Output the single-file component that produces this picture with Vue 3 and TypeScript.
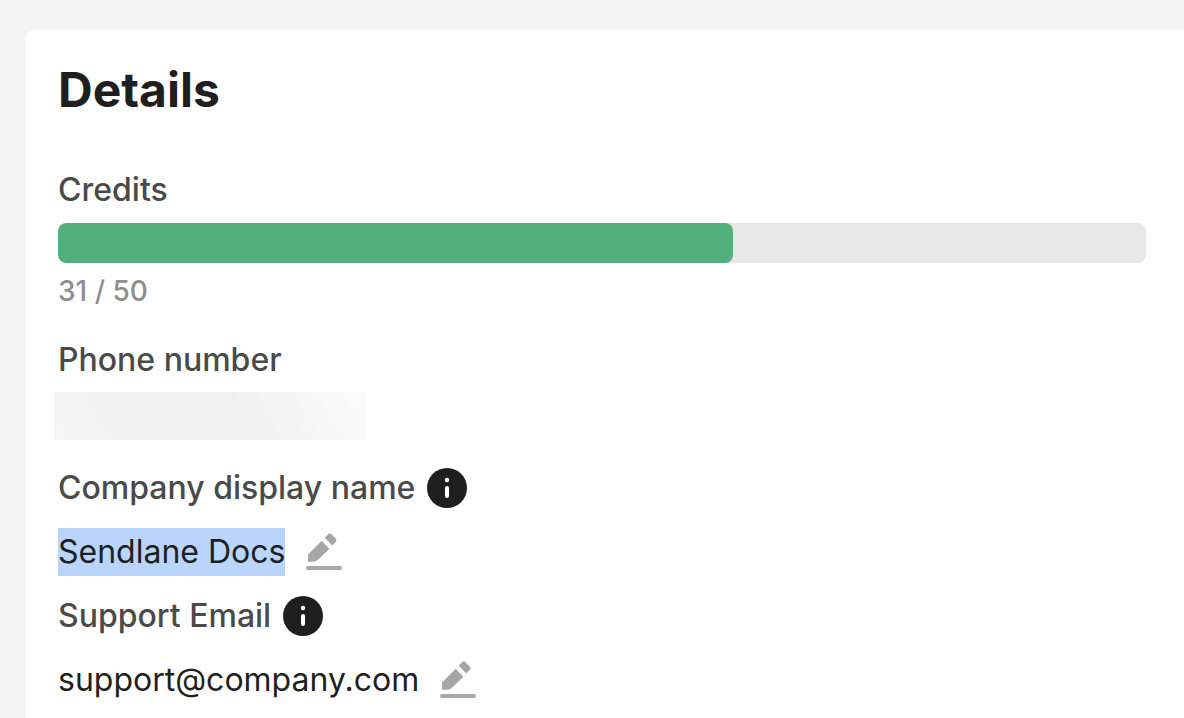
<script setup lang="ts">
const used = 31
const total = 50
</script>

<template>
  <main class="page">
    <section class="card">
      <h1>Details</h1>
      <div class="credits">
        <h2 id="credits-label" class="label">Credits</h2>
        <div class="track" role="progressbar" aria-labelledby="credits-label" :aria-valuenow="used" aria-valuemin="0" :aria-valuemax="total">
          <div class="fill" :style="{ width: (used / total) * 100 + '%' }"></div>
        </div>
        <p class="count">{{ used }} / {{ total }}</p>
      </div>
      <h2 class="label">Phone number</h2>
      <div class="redacted"></div>
      <div class="row">
        <h2 class="label">Company display name</h2>
        <button class="info" type="button" aria-label="About company display name">
          <svg viewBox="0 0 40 40"><circle cx="20" cy="20" r="20" fill="#1f1f1f" /><circle cx="20" cy="12" r="2.2" fill="#fff" /><path d="M20 20v8" stroke="#fff" stroke-width="4" stroke-linecap="round" /></svg>
        </button>
      </div>
      <div class="row">
        <span class="value selected">Sendlane Docs</span>
        <button class="edit" type="button" aria-label="Edit company display name">
          <svg viewBox="0 0 36 40"><path d="M2 22.500 15.700 8.700l7.700 8L12.500 27.200Q10 29.700 6.500 29.700H2zM18.700 5.700 22.300 2q1.500-1.500 3 0l4.600 4.700q1.300 1.500 0 3L26.300 13.600z" fill="#a6a6a6" /><path d="M2 36h32" stroke="#a6a6a6" stroke-width="4" stroke-linecap="round" /></svg>
        </button>
      </div>
      <div class="row">
        <h2 class="label">Support Email</h2>
        <button class="info" type="button" aria-label="About support email">
          <svg viewBox="0 0 40 40"><circle cx="20" cy="20" r="20" fill="#1f1f1f" /><circle cx="20" cy="12" r="2.2" fill="#fff" /><path d="M20 20v8" stroke="#fff" stroke-width="4" stroke-linecap="round" /></svg>
        </button>
      </div>
      <div class="row">
        <span class="value">support@company.com</span>
        <button class="edit" type="button" aria-label="Edit support email">
          <svg viewBox="0 0 36 40"><path d="M2 22.500 15.700 8.700l7.700 8L12.500 27.200Q10 29.700 6.500 29.700H2zM18.700 5.700 22.300 2q1.500-1.500 3 0l4.600 4.700q1.300 1.500 0 3L26.300 13.600z" fill="#a6a6a6" /><path d="M2 36h32" stroke="#a6a6a6" stroke-width="4" stroke-linecap="round" /></svg>
        </button>
      </div>
    </section>
  </main>
</template>

<style>
body { background: #f4f4f4; }
</style>
<style scoped>
.page { box-sizing: border-box; height: 100vh; overflow: hidden; padding: 30px 0 0 26px; background: #f4f4f4; font-family: Inter, sans-serif; color: #1f1f1f; }
.card { box-sizing: border-box; min-height: 100%; padding: 32px 38px 6px 32px; background: #fff; border-radius: 8px 0 0 0; }
h1, h2, p { margin: 0; }
h1 { font-size: 48px; line-height: 56px; font-weight: 700; }
.credits { margin: 48px 0 25px; }
.label { font-size: 32px; line-height: 48px; font-weight: 500; color: #4a4a4a; }
.track { height: 40px; margin-top: 9px; border-radius: 8px; background: #e7e7e7; overflow: hidden; }
.fill { height: 100%; border-radius: 8px; background: #51b07d; }
.count { margin-top: 8px; font-size: 28px; line-height: 40px; font-weight: 500; color: #8e8e8e; }
.redacted { width: 312px; height: 48px; margin: 8px 0 24px -4px; background: linear-gradient(60deg, #f6f6f6, #f0f0f0 30%, #f0f0f0 58%, #fcfcfc); }
.row { display: flex; align-items: center; margin-bottom: 16px; }
.value { font-size: 32px; line-height: 48px; }
.selected { background: #b9d5fb; }
button { flex: none; padding: 0; border: 0; background: none; cursor: pointer; }
svg { display: block; width: 100%; height: 100%; }
.info { width: 40px; height: 40px; margin-left: 12px; }
.edit { width: 36px; height: 40px; margin-left: 21px; }
</style>
